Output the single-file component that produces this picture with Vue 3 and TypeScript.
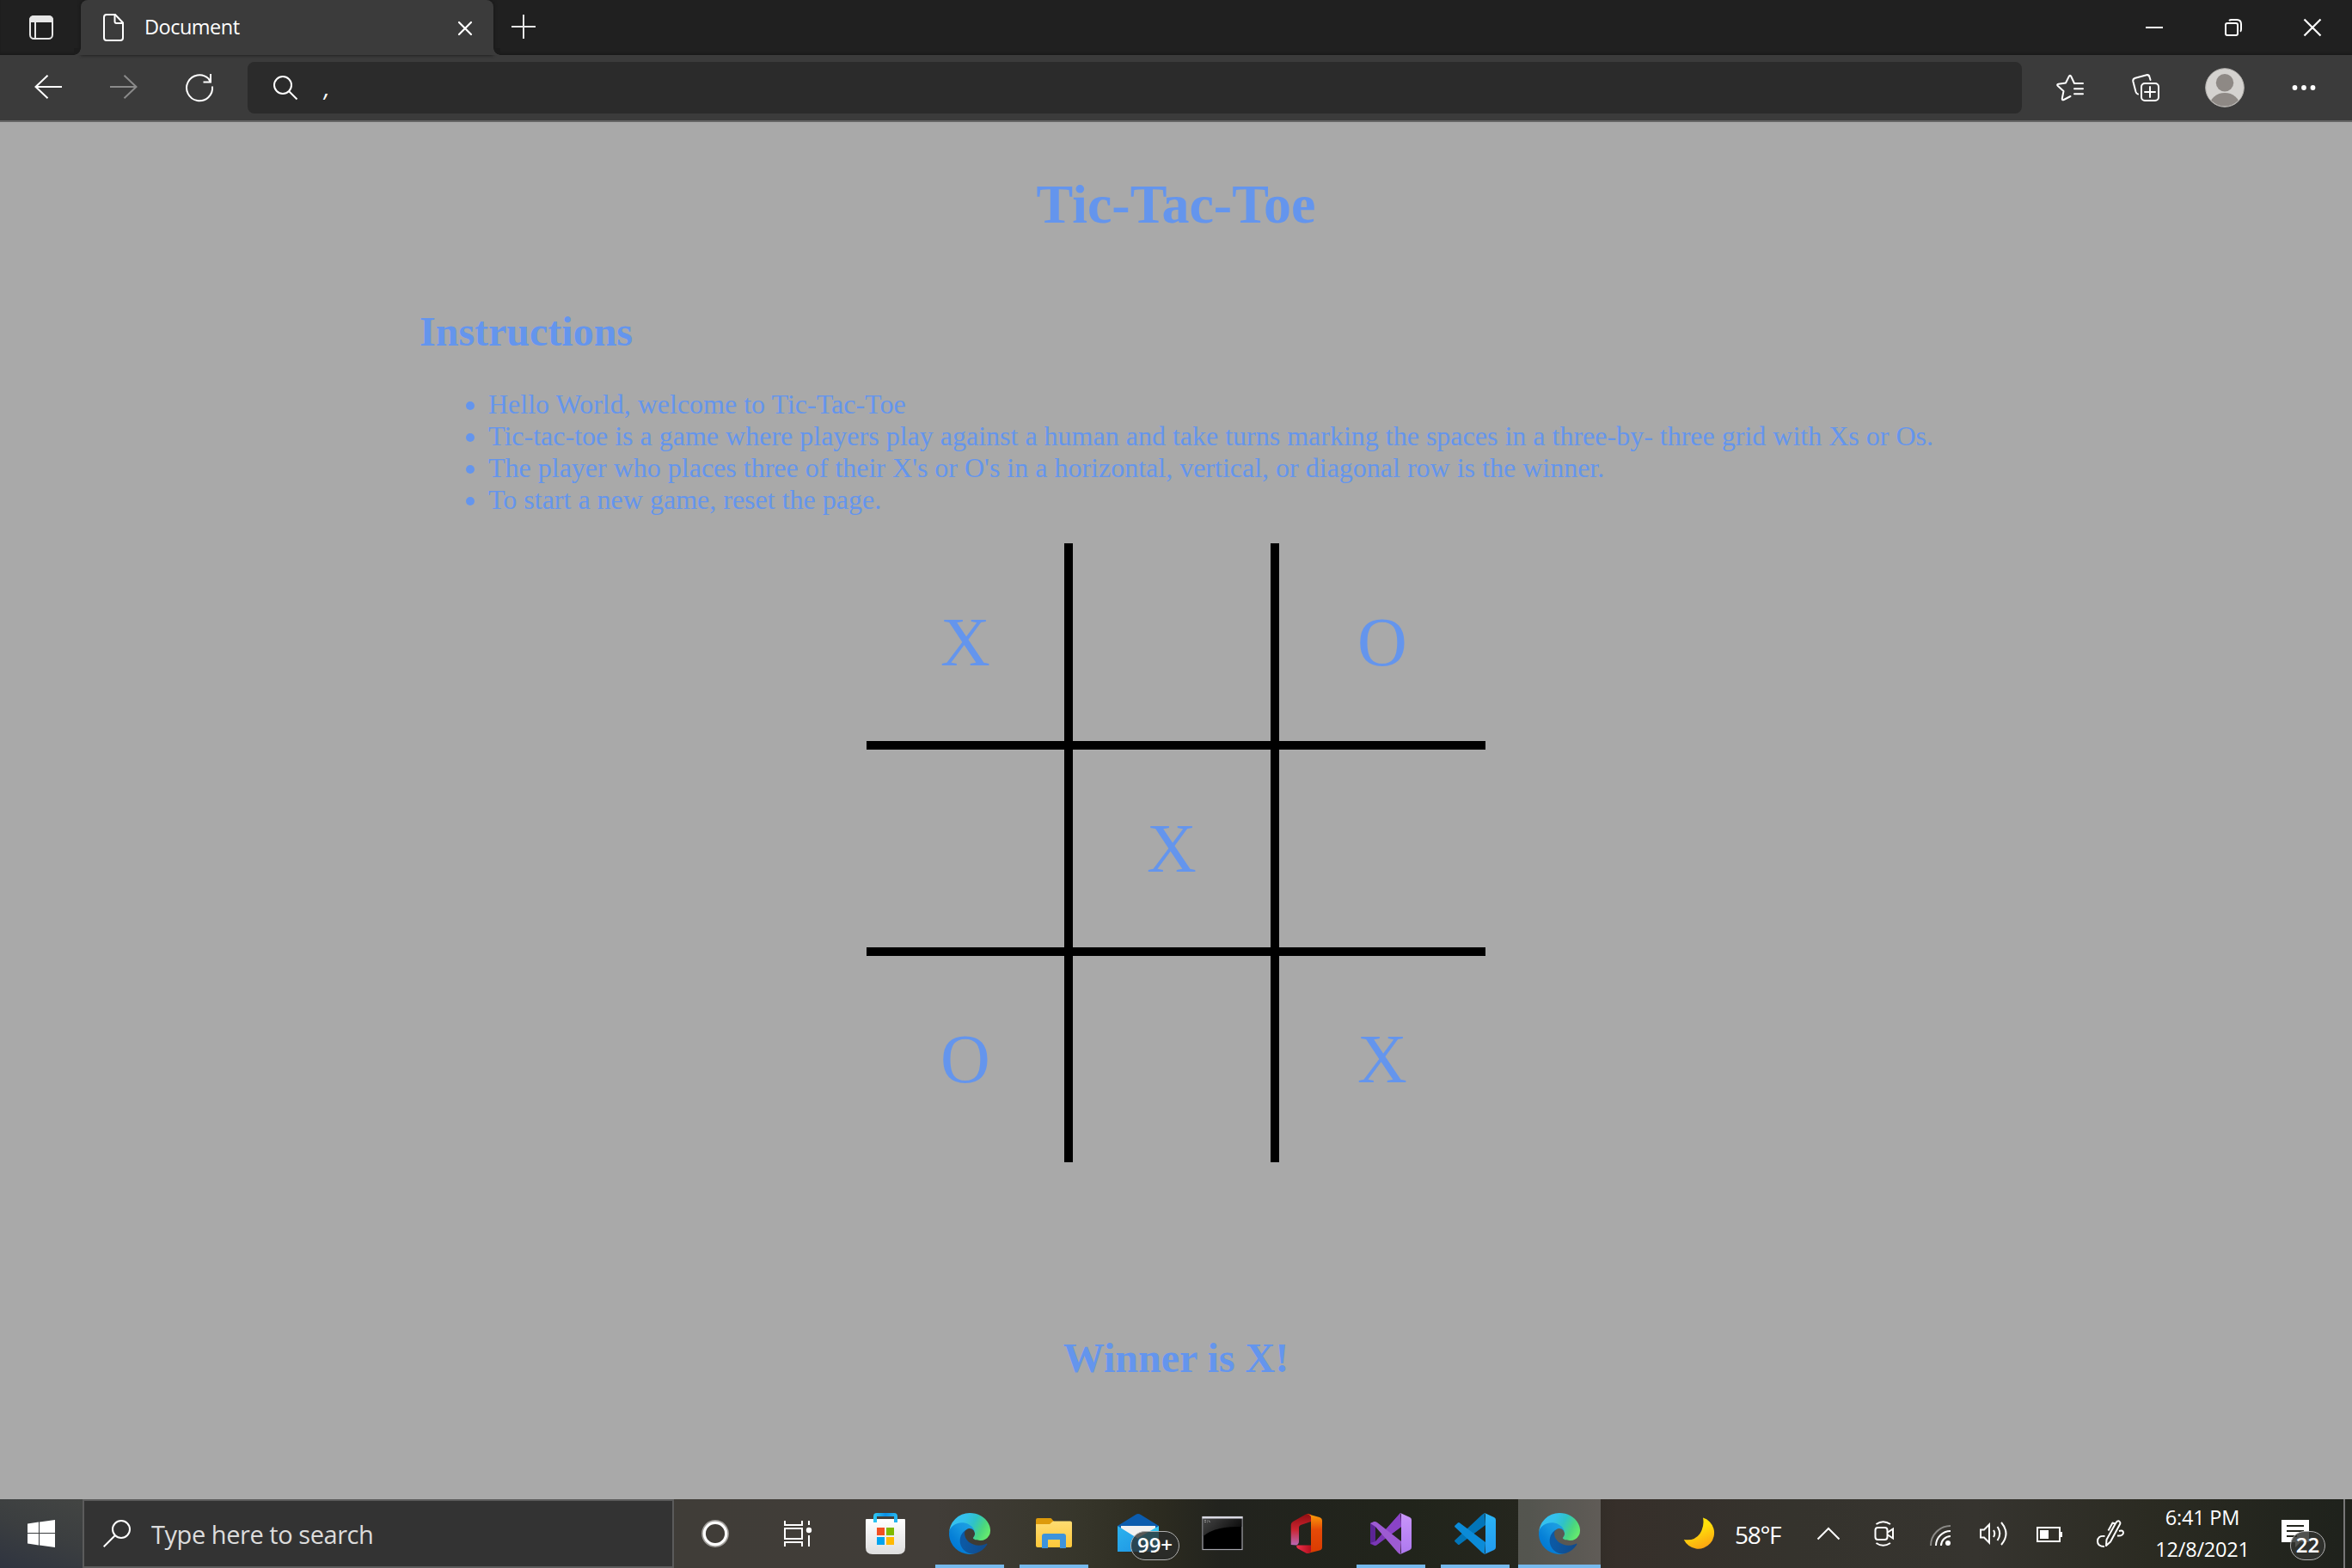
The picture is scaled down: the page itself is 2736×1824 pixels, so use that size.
<script setup lang="ts">
type Mark = 'X' | 'O' | ''

interface TaskApp {
  id: string
  running: boolean
  active?: boolean
}

const board: Mark[] = ['X', '', 'O', '', 'X', '', 'O', '', 'X']

const instructions: string[] = [
  'Hello World, welcome to Tic-Tac-Toe',
  'Tic-tac-toe is a game where players play against a human and take turns marking the spaces in a three-by- three grid with Xs or Os.',
  "The player who places three of their X's or O's in a horizontal, vertical, or diagonal row is the winner.",
  'To start a new game, reset the page.',
]

const apps: TaskApp[] = [
  { id: 'store', running: false },
  { id: 'edge', running: true },
  { id: 'files', running: true },
  { id: 'mail', running: false },
  { id: 'terminal', running: false },
  { id: 'office', running: false },
  { id: 'vs', running: true },
  { id: 'code', running: true },
  { id: 'edge', running: true, active: true },
]
</script>

<template>
  <div class="screen">
    <header class="tabbar">
      <div class="tab-actions">
        <svg width="28" height="28" viewBox="0 0 28 28">
          <rect x="1" y="1" width="26" height="26" rx="4.5" fill="none" stroke="#e6e6e6" stroke-width="2" />
          <path d="M0 8V5.500Q0 0 5.500 0H22.500Q28 0 28 5.500V8Z" fill="#e6e6e6" />
          <path d="M7 8V27" stroke="#e6e6e6" stroke-width="2" />
        </svg>
      </div>
      <div class="tab">
        <svg class="tab-file" width="24" height="32" viewBox="0 0 24 32" fill="none" stroke="#fff" stroke-width="2">
          <path d="M4 1H14L23 10.500V28Q23 31 20 31H4Q1 31 1 28V4Q1 1 4 1Z" />
          <path d="M13.500 1V9Q13.500 11 15.500 11H23" />
        </svg>
        <span class="tab-title">Document</span>
        <svg class="tab-close" width="16" height="16" viewBox="0 0 16 16" stroke="#fff" stroke-width="2.200" stroke-linecap="round">
          <path d="M1 1L15 15M15 1L1 15" />
        </svg>
      </div>
      <svg class="new-tab" width="28" height="28" viewBox="0 0 28 28" stroke="#e6e6e6" stroke-width="2">
        <path d="M14 0V28M0 14H28" />
      </svg>
      <div class="window-buttons">
        <svg width="20" height="20" viewBox="0 0 20 20" stroke="#fff" stroke-width="2"><path d="M0 10H20" /></svg>
        <svg width="20" height="20" viewBox="0 0 20 20" fill="none" stroke="#fff" stroke-width="2">
          <rect x="1" y="5" width="14" height="14" rx="2" />
          <path d="M5 2Q6 1 8 1H14Q19 1 19 6V12Q19 14 18 14.800" />
        </svg>
        <svg width="20" height="20" viewBox="0 0 20 20" stroke="#fff" stroke-width="2.200"><path d="M.5 .5L19.500 19.500M19.500 .5L.5 19.500" /></svg>
      </div>
    </header>

    <nav class="toolbar">
      <svg class="nav-back" width="32" height="28" viewBox="0 0 32 28" fill="none" stroke="#fff" stroke-width="2">
        <path d="M15.500 .7L1.500 14L15.500 27.300M1.500 14H32" />
      </svg>
      <svg class="nav-forward" width="32" height="28" viewBox="0 0 32 28" fill="none" stroke="#8a8a8a" stroke-width="2">
        <path d="M16.500 .7L30.500 14L16.500 27.300M30.500 14H0" />
      </svg>
      <svg class="nav-reload" width="32" height="32" viewBox="0 0 32 32" fill="none" stroke="#fff" stroke-width="2">
        <path d="M31 14.500A15 15 0 1 1 26.500 5.400L29 9.500M29 0V9.500H20.500" />
      </svg>
      <div class="address">
        <svg width="28" height="28" viewBox="0 0 28 28" fill="none" stroke="#fff" stroke-width="2">
          <circle cx="11" cy="11" r="10" />
          <path d="M18 18L27.500 27.500" />
        </svg>
        <span>,</span>
      </div>
      <div class="tools">
        <svg width="32" height="32" viewBox="0 0 32 32" fill="none" stroke="#fff" stroke-width="2" stroke-linejoin="round" stroke-linecap="round">
          <path d="M31 11H21L17.300 3Q16 .5 14.700 3L11 10.500L2.500 11.700Q.2 12.200 1.900 14L8.500 20L6.800 28.500Q6.600 31 8.800 30L16.500 26" />
          <path d="M21 17.300H31M21 23.300H31" />
        </svg>
        <svg width="32" height="32" viewBox="0 0 32 32" fill="none" stroke="#fff" stroke-width="2" stroke-linecap="round">
          <rect x="11" y="11" width="20" height="20" rx="4" />
          <path d="M21 15V27M15 21H27" />
          <path d="M21.500 7L20.500 3.500Q19.800 .7 17 1.200L4 4.700Q.8 5.600 1.300 8.500L4.500 20.800Q5.200 23.200 7 23.500" />
        </svg>
        <svg class="avatar" width="46" height="46" viewBox="0 0 46 46">
          <defs><clipPath id="avatar-clip"><circle cx="23" cy="23" r="21.600" /></clipPath></defs>
          <circle cx="23" cy="23" r="22.300" fill="#d4d2cf" stroke="#b5b3b0" stroke-width="1" />
          <g clip-path="url(#avatar-clip)" fill="#8e8985">
            <circle cx="23" cy="17.200" r="10.200" />
            <ellipse cx="23" cy="44" rx="17.500" ry="15" />
          </g>
        </svg>
        <svg class="more" width="28" height="8" viewBox="0 0 28 8" fill="#fff">
          <circle cx="3.500" cy="4" r="2.900" /><circle cx="14" cy="4" r="2.900" /><circle cx="24.500" cy="4" r="2.900" />
        </svg>
      </div>
    </nav>

    <main class="page">
      <h1>Tic-Tac-Toe</h1>
      <section class="instructions">
        <h2>Instructions</h2>
        <ul>
          <li v-for="line in instructions" :key="line">{{ line }}</li>
        </ul>
      </section>
      <div class="board">
        <div v-for="(mark, i) in board" :key="i" class="cell" :class="{ right: i % 3 === 2, bottom: i > 5 }">{{ mark }}</div>
      </div>
      <h2 class="winner">Winner is X!</h2>
    </main>

    <footer class="taskbar">
      <div class="start">
        <svg width="32" height="32" viewBox="0 0 32 32" fill="#fff">
          <path d="M0 4.500L13 2.600V15H0ZM14 2.450L32 0V15H14ZM0 16H13V29.400L0 27.500ZM14 16H32V32L14 29.550Z" />
        </svg>
      </div>
      <div class="search">
        <svg width="32" height="32" viewBox="0 0 32 32" fill="none" stroke="#fff" stroke-width="2">
          <circle cx="21" cy="11" r="10" />
          <path d="M14 18L.7 31.300" />
        </svg>
        <span>Type here to search</span>
      </div>
      <div class="slot">
        <svg width="32" height="32" viewBox="0 0 32 32" fill="none">
          <circle cx="16" cy="16" r="14.700" stroke="#a09e9a" stroke-width="2.400" />
          <circle cx="16" cy="16" r="12.700" stroke="#fff" stroke-width="3.200" />
        </svg>
      </div>
      <div class="slot">
        <svg width="32" height="30" viewBox="0 0 32 30" fill="none" stroke="#fff" stroke-width="2">
          <path d="M1 0V5H21V0M1 30V25H21V30M1 9H21V21H1ZM29 0V5M29 17V30" />
          <circle cx="29" cy="11" r="3.200" fill="#fff" stroke="none" />
        </svg>
      </div>

      <div class="apps">
        <div v-for="(app, i) in apps" :key="i" class="app" :class="{ running: app.running, active: app.active }">
          <svg v-if="app.id === 'store'" width="48" height="48" viewBox="0 0 48 48">
            <defs>
              <linearGradient id="bag" x2="0" y2="1"><stop offset="0" stop-color="#fff" /><stop offset="1" stop-color="#dedede" /></linearGradient>
              <linearGradient id="handle"><stop offset="0" stop-color="#2cc4f2" /><stop offset=".5" stop-color="#0c8fe6" /><stop offset="1" stop-color="#25b5f0" /></linearGradient>
            </defs>
            <path d="M2 7H46Q47 7 47 8V40Q47 48 39 48H9Q1 48 1 40V8Q1 7 2 7Z" fill="url(#bag)" />
            <path d="M12 11V4Q12 2 14 2H34Q36 2 36 4V11" fill="none" stroke="url(#handle)" stroke-width="4" />
            <path d="M14 17H23V26H14Z" fill="#f25022" /><path d="M25 17H34V26H25Z" fill="#7fba00" />
            <path d="M14 28H23V37H14Z" fill="#00a4ef" /><path d="M25 28H34V37H25Z" fill="#ffb900" />
          </svg>

          <svg v-else-if="app.id === 'edge'" width="48" height="48" viewBox="0 0 256 256">
            <defs>
              <linearGradient :id="'edge-a' + i" x1=".2" y1=".5" x2="1" y2=".6"><stop offset="0" stop-color="#0c59a4" /><stop offset="1" stop-color="#114a8b" /></linearGradient>
              <linearGradient :id="'edge-b' + i" x1=".8" y1=".2" x2=".2" y2=".9"><stop offset="0" stop-color="#1b9de2" /><stop offset=".3" stop-color="#1595df" /><stop offset=".7" stop-color="#0680d7" /><stop offset="1" stop-color="#0078d4" /></linearGradient>
              <linearGradient :id="'edge-c' + i" x1="0" y1=".3" x2="1" y2=".65"><stop offset="0" stop-color="#35c1f1" /><stop offset=".3" stop-color="#34c1ed" /><stop offset=".55" stop-color="#2fc2c8" /><stop offset=".8" stop-color="#4bd67e" /><stop offset="1" stop-color="#66eb6e" /></linearGradient>
            </defs>
            <path :fill="`url(#edge-a${i})`" d="M231 190.500c-3.400 1.800-6.900 3.400-10.500 4.700a101.500 101.500 0 0 1-35.900 6.400c-47.300 0-88.500-32.500-88.500-74.300 0-11.500 6.400-22 16.300-27.300-42.800 1.800-53.800 46.400-53.800 72.500 0 73.900 68.100 81.400 82.800 81.400 7.900 0 19.800-2.300 27-4.600l1.300-.4a128.300 128.300 0 0 0 66.600-52.800 4 4 0 0 0-5.300-5.600z" />
            <path :fill="`url(#edge-b${i})`" d="M105.700 241.400a79.200 79.200 0 0 1-22.700-21.300 80.700 80.700 0 0 1 29.500-120c3.200-1.500 8.500-4.100 15.600-4a32.400 32.400 0 0 1 25.700 13 31.900 31.900 0 0 1 6.300 18.700c0-.2 24.500-79.600-80-79.600-43.900 0-80 41.700-80 78.200 0 19.300 4.500 38.500 12.600 56a128 128 0 0 0 156.600 67.100 75.500 75.500 0 0 1-63.600-8.100z" />
            <path :fill="`url(#edge-c${i})`" d="M152.300 148.900c-.9 1-3.400 2.500-3.400 5.600 0 2.600 1.700 5.200 4.800 7.300 14.400 10.100 41.700 8.800 41.800 8.800a59.600 59.600 0 0 0 30.300-8.400A61.400 61.400 0 0 0 256 109.200c.3-22.400-8-37.300-11.300-43.900C223.500 24 177.700.3 128 .3A128 128 0 0 0 0 126.500c.5-36.500 36.800-66 80-66 3.500 0 23.500.3 42 10a72.600 72.600 0 0 1 30.900 29.300c6.100 10.600 7.200 24.100 7.200 29.500s-2.700 13.300-7.800 19.600z" />
          </svg>

          <svg v-else-if="app.id === 'files'" width="48" height="48" viewBox="0 0 48 48">
            <defs><linearGradient id="folder" x2="0" y2="1"><stop offset="0" stop-color="#ffdc72" /><stop offset="1" stop-color="#fdc83a" /></linearGradient></defs>
            <path d="M3 8Q3 6 5 6H20Q21 6 21.500 7L24 10L20 14H3Z" fill="#dd9a0b" />
            <path d="M3 13H19L23 9.500H43Q45 9.500 45 11.500V38Q45 40 43 40H5Q3 40 3 38Z" fill="url(#folder)" />
            <path d="M10 41V27Q10 24 13 24H35Q38 24 38 27V41H31V31H17V41Z" fill="#3c93dc" />
          </svg>

          <div v-else-if="app.id === 'mail'" class="badged">
            <svg width="48" height="48" viewBox="0 0 48 48">
              <defs><linearGradient id="mail" y2="1"><stop offset="0" stop-color="#2bb3ef" /><stop offset="1" stop-color="#1d8fe0" /></linearGradient></defs>
              <path d="M0 15L21 2Q24 0 27 2L48 15L44 20H4Z" fill="#0b5cae" />
              <path d="M4 15H44V28L24 36L4 24Z" fill="#f1f1f1" />
              <path d="M48 15V45H24L24 29Z" fill="#35c6f4" />
              <path d="M0 15L48 45H0Z" fill="url(#mail)" />
            </svg>
            <span class="badge mail-badge">99+</span>
          </div>

          <svg v-else-if="app.id === 'terminal'" width="48" height="48" viewBox="0 0 48 48">
            <defs><linearGradient id="sheen" x2="1" y2=".5"><stop offset="0" stop-color="#454545" /><stop offset="1" stop-color="#0c0c0c" /></linearGradient></defs>
            <rect x="1" y="4.500" width="46" height="38" fill="#000" stroke="#a5a5ad" stroke-width="1.200" />
            <path d="M1.600 6H46.400V16Q16 15 1.600 27Z" fill="url(#sheen)" />
            <path d="M.5 4H47.500V6.500H.5Z" fill="#d9d9e3" />
            <path d="M3 8.500h2M3 10.500h2M6 9h.8M6 10.800h.8M8 8.500l1.500 2.500" stroke="#aaa" stroke-width=".8" />
          </svg>

          <svg v-else-if="app.id === 'office'" width="48" height="48" viewBox="0 0 48 48">
            <defs>
              <linearGradient id="office-l" x2="0" y2="1"><stop offset="0" stop-color="#8f0d10" /><stop offset=".5" stop-color="#cb2430" /><stop offset="1" stop-color="#b968b4" /></linearGradient>
              <linearGradient id="office-r" x2="0" y2="1"><stop offset="0" stop-color="#fda00a" /><stop offset=".4" stop-color="#e64a07" /><stop offset="1" stop-color="#d83b01" /></linearGradient>
              <linearGradient id="office-b"><stop offset="0" stop-color="#f0314d" /><stop offset="1" stop-color="#b20f1d" /></linearGradient>
            </defs>
            <path d="M23 1.500L8 10Q5.700 11.300 5.700 14V37L12 37.500Q15 36 15 33V17Q15 15 17 14L29 10V1.500Q26 0 23 1.500Z" fill="url(#office-l)" />
            <path d="M24 1L39 5Q42 6 42 9V40Q42 42.500 39 43.500L25 47L29 43V4Q28 2 24 1Z" fill="url(#office-r)" />
            <path d="M12.500 37.500H29V45Q26 48 23 46.500L14 41.500Q11.500 40 12.500 37.500Z" fill="url(#office-b)" />
          </svg>

          <svg v-else-if="app.id === 'vs'" width="48" height="48" viewBox="0 0 48 48">
            <defs><linearGradient id="vs-r" x2="0" y2="1"><stop offset="0" stop-color="#c996fa" /><stop offset="1" stop-color="#ad78ee" /></linearGradient></defs>
            <path d="M0 12L4.500 10L6 15V33L5 38L0 36Z" fill="#5b2494" />
            <path d="M35 0L36 16L8 37Q6 38.500 4.500 37.500L0 35L6 33Z" fill="#7a37b5" />
            <path d="M35 0L36 16L24 25L18 19Z" fill="#8a43c6" />
            <path d="M0 12L4.500 10Q6 9.500 8 11L36 33L35 48Q34 48 32 46L6 16Z" fill="#9d5bd2" />
            <path d="M35 0L46 5Q48 6 48 8V40Q48 42 46 43L35 48Q36 47 36 45V3Q36 1 35 0Z" fill="url(#vs-r)" />
          </svg>

          <svg v-else width="48" height="48" viewBox="0 0 48 48">
            <defs><linearGradient id="code-r" x2="0" y2="1"><stop offset="0" stop-color="#2bb5f5" /><stop offset="1" stop-color="#219af0" /></linearGradient></defs>
            <path d="M35 0L36 14L6 36.500Q5 37.500 3.800 36.500L.6 33.500Q-.5 32.500 .6 31.500L32 2Z" fill="#0275b8" />
            <path d="M35 48L36 34L6 11.500Q5 10.500 3.800 11.500L.6 14.500Q-.5 15.500 .6 16.500L32 46Z" fill="#0b8bd8" />
            <path d="M35 0L46 5Q48 6 48 8V40Q48 42 46 43L35 48Q36 47 36 45V3Q36 1 35 0Z" fill="url(#code-r)" />
          </svg>
        </div>
      </div>

      <div class="weather">
        <svg width="38" height="38" viewBox="0 0 38 38">
          <defs><linearGradient id="moon" x1=".3" x2=".7" y2="1"><stop offset=".35" stop-color="#ffe10a" /><stop offset="1" stop-color="#fba012" /></linearGradient></defs>
          <path d="M23 0.500A18.500 18.500 0 1 1 .8 26Q13 28 19.500 19Q25 10 23 .5Z" fill="url(#moon)" />
        </svg>
        <span>58°F</span>
      </div>

      <div class="tray">
        <div class="t-chevron">
          <svg width="28" height="16" viewBox="0 0 28 16" fill="none" stroke="#fff" stroke-width="2"><path d="M1.500 14.500L14 2L26.500 14.500" /></svg>
        </div>
        <div class="t-camera">
          <svg width="24" height="30" viewBox="0 0 24 30" fill="none" stroke="#fff" stroke-width="2">
            <rect x="1.500" y="8" width="14" height="14" rx="3" />
            <path d="M16 13.500L22 9.500V20.500L16 16.500M2.500 4Q10.500-1.500 19 4M2.500 26Q10.500 31.500 19 26" />
          </svg>
        </div>
        <div class="t-wifi">
          <svg width="24" height="24" viewBox="0 0 24 24" fill="none" stroke="#fff" stroke-width="2">
            <path d="M1 24A23 23 0 0 1 24 1" stroke="#8b8a87" />
            <path d="M7 24A17 17 0 0 1 24 7M13 24A11 11 0 0 1 24 13" />
            <circle cx="21" cy="21" r="3" fill="#fff" stroke="none" />
          </svg>
        </div>
        <div class="t-sound">
          <svg width="32" height="28" viewBox="0 0 32 28" fill="none" stroke="#fff" stroke-width="2">
            <path d="M1 9.500H5L11 3.500V24.500L5 18.500H1Z" />
            <path d="M16 10Q18.500 14 16 18M20.500 6Q26 14 20.500 22M25 1Q36 14 25 27" />
          </svg>
        </div>
        <div class="t-battery">
          <svg width="30" height="18" viewBox="0 0 30 18" fill="none" stroke="#fff" stroke-width="2">
            <rect x="1" y="1" width="26" height="16" />
            <path d="M4 4H14V14H4ZM28 6H30V12H28Z" fill="#fff" stroke="none" />
          </svg>
        </div>
        <div class="t-pen">
          <svg width="32" height="32" viewBox="0 0 32 32" fill="none" stroke="#fff" stroke-width="2" stroke-linejoin="round">
            <path d="M11.500 23L22 4Q24 .5 26 1.500Q28.500 3 26.500 6L16 25.500L11 30Z" />
            <path d="M21.500 4.500L18.500 3.500L13.500 12.500M26 13Q31 11.500 31 15Q30.500 19 24 18.500M9.500 19Q1 18 1 25Q1 31 9 31" />
          </svg>
        </div>
        <div class="clock">
          <span>6:41 PM</span>
          <span>12/8/2021</span>
        </div>
        <div class="notify badged">
          <svg width="32" height="32" viewBox="0 0 32 32">
            <path d="M0 0H32V26H22L16 32V26H0Z" fill="#fff" />
            <path d="M6 7H26M6 13H26M6 19H18" stroke="#23251e" stroke-width="2" />
          </svg>
          <span class="badge notify-badge">22</span>
        </div>
        <div class="show-desktop"></div>
      </div>
    </footer>
  </div>
</template>

<style>
body {
  margin: 0;
  background: #a9a9a9;
  overflow: hidden;
}
</style>

<style scoped>
.screen {
  width: 2736px;
  height: 1824px;
  display: flex;
  flex-direction: column;
  overflow: hidden;
  background: #a9a9a9;
  font-family: 'Open Sans', 'Noto Sans', sans-serif;
  color: #fff;
}
svg {
  display: block;
  flex: none;
  overflow: visible;
}
span {
  white-space: nowrap;
}

.tabbar {
  height: 64px;
  flex: none;
  display: flex;
  align-items: center;
  background: #202020;
  box-shadow: inset 0 -3px 3px -2px #161616;
}
.tab-actions {
  width: 94px;
  display: flex;
  padding-left: 34px;
  box-sizing: border-box;
}
.tab {
  position: relative;
  width: 480px;
  height: 64px;
  box-sizing: border-box;
  padding: 0 25px 0 26px;
  display: flex;
  align-items: center;
  background: #3b3b3b;
  border-radius: 8px 8px 0 0;
  box-shadow: 0 0 4px #141414;
}
.tab::before,
.tab::after {
  content: '';
  position: absolute;
  bottom: 0;
  width: 8px;
  height: 8px;
}
.tab::before {
  left: -8px;
  background: radial-gradient(circle at 0 0, #1c1c1c 7.500px, #3b3b3b 8px);
}
.tab::after {
  right: -8px;
  background: radial-gradient(circle at 100% 0, #1c1c1c 7.500px, #3b3b3b 8px);
}
.tab-title {
  flex: 1;
  margin-left: 24px;
  padding-bottom: 2px;
  font-size: 23.500px;
  line-height: 32px;
  letter-spacing: -0.500px;
}
.tab-close {
  margin-top: 2px;
}
.new-tab {
  margin-left: 21px;
  margin-bottom: 2px;
}
.window-buttons {
  margin-left: auto;
  margin-right: 36px;
  display: flex;
  gap: 72px;
}

.toolbar {
  height: 78px;
  flex: none;
  box-sizing: border-box;
  border-bottom: 2px solid #666;
  background: #3b3b3b;
  display: flex;
  align-items: center;
}
.nav-back {
  margin-left: 40px;
  margin-bottom: 2px;
}
.nav-forward {
  margin-left: 56px;
  margin-bottom: 2px;
}
.nav-reload {
  margin-left: 56px;
}
.address {
  width: 2064px;
  height: 60px;
  margin-left: 40px;
  box-sizing: border-box;
  padding-left: 30px;
  display: flex;
  align-items: center;
  background: #2b2b2b;
  border-radius: 8px;
}
.address span {
  margin-left: 31px;
  font-size: 27px;
  line-height: 40px;
  font-style: italic;
}
.tools {
  display: flex;
  align-items: center;
  margin-left: 40px;
}
.tools svg + svg {
  margin-left: 56px;
}
.tools .avatar {
  margin-left: 53px !important;
}
.tools .more {
  margin-left: 55px !important;
}

.page {
  flex: 1;
  min-height: 0;
  font-family: 'Liberation Serif', 'Times New Roman', serif;
  color: #6495ed;
}
h1 {
  margin: 59px 0 0;
  font-size: 64px;
  line-height: 74px;
  text-align: center;
}
.instructions {
  margin: 83px 0 0 488px;
}
.instructions h2 {
  margin: 0;
  font-size: 48px;
  line-height: 55px;
}
ul {
  margin: 39px 0 32px;
  padding-left: 80px;
  font-size: 32px;
  line-height: 37px;
}
.board {
  width: 720px;
  height: 720px;
  margin: 0 auto;
  display: grid;
  grid-template: repeat(3, 240px) / repeat(3, 240px);
}
.cell {
  box-sizing: border-box;
  border-right: 10px solid #000;
  border-bottom: 10px solid #000;
  display: flex;
  align-items: center;
  justify-content: center;
  font-size: 80px;
  line-height: 92px;
}
.cell.right {
  border-right: 0;
}
.cell.bottom {
  border-bottom: 0;
}
.winner {
  margin: 200px 0 0;
  font-size: 48px;
  line-height: 55px;
  text-align: center;
}

.taskbar {
  height: 80px;
  flex: none;
  display: flex;
  background: linear-gradient(90deg, #3c3e3e 0, #403d38 800px, #413d38 1090px, #37362b 1250px, #2c2b20 1350px, #22231e 1420px, #21241b 1640px, #25261e 1780px, #362f2a 1880px, #35332d 2080px, #36342f 2300px, #2b2b22 2500px, #1f221c 2720px);
}
.start {
  width: 96px;
  display: flex;
  align-items: center;
  justify-content: center;
  background: linear-gradient(200deg, #434543, #3b3e40 50%, #2f3440);
}
.search {
  width: 688px;
  box-sizing: border-box;
  border: 2px solid #5b5b5b;
  background: #333;
  padding-left: 22px;
  display: flex;
  align-items: center;
}
.search span {
  margin-left: 24px;
  padding-top: 1px;
  font-size: 29px;
  line-height: 40px;
  letter-spacing: -0.450px;
  color: #dcdcdc;
}
.slot {
  width: 96px;
  display: flex;
  align-items: center;
  justify-content: center;
}
.apps {
  display: flex;
  gap: 2px;
  margin-left: 6px;
}
.app {
  position: relative;
  width: 96px;
  display: flex;
  align-items: center;
  justify-content: center;
}
.app.active {
  background: rgba(255, 255, 255, 0.220);
}
.app.running::after {
  content: '';
  position: absolute;
  left: 8px;
  right: 8px;
  bottom: 0;
  height: 4px;
  background: #76b9ed;
}
.app.active::after {
  left: 0;
  right: 0;
}
.badged {
  position: relative;
}
.badge {
  position: absolute;
  box-sizing: border-box;
  height: 34px;
  border: 1.500px solid #b0b0b0;
  border-radius: 17px;
  background: rgba(42, 44, 42, 0.780);
  font-weight: 600;
  font-size: 24px;
  line-height: 30px;
  text-align: center;
}
.mail-badge {
  left: 15px;
  top: 21px;
  width: 57px;
}
.notify-badge {
  left: 10px;
  top: 13px;
  width: 41px;
  background: rgba(50, 52, 48, 0.850);
}

.weather {
  margin-left: 96px;
  display: flex;
  align-items: center;
  width: 137px;
}
.weather span {
  margin-left: 22px;
  padding-top: 1px;
  font-size: 28px;
  line-height: 40px;
  letter-spacing: -1.300px;
}
.tray {
  display: flex;
  flex: 1;
}
.tray > div {
  flex: none;
  display: flex;
  align-items: center;
  justify-content: center;
}
.t-chevron {
  width: 64px;
}
.t-camera {
  width: 66px;
}
.t-wifi {
  width: 64px;
  padding-top: 4px;
  box-sizing: border-box;
}
.t-sound {
  width: 60px;
}
.t-battery {
  width: 70px;
  padding-top: 2px;
  box-sizing: border-box;
}
.t-pen {
  width: 72px;
}
.tray > .clock {
  width: 142px;
  flex-direction: column;
  font-size: 23.500px;
  line-height: 37px;
  letter-spacing: -0.200px;
}
.tray > .notify {
  width: 32px;
  height: 32px;
  margin: 24px 0 0 21px;
}
.show-desktop {
  width: 8px;
  margin-left: 40px;
  border-left: 2px solid #777;
}
</style>
